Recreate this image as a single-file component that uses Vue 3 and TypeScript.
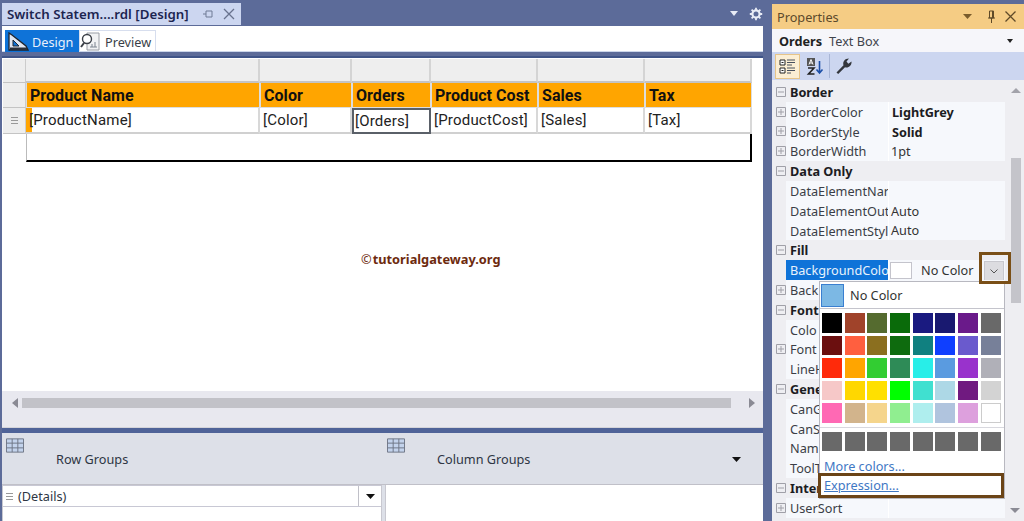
<script setup lang="ts">
const headers = ['Product Name', 'Color', 'Orders', 'Product Cost', 'Sales', 'Tax']
const fields = ['[ProductName]', '[Color]', '[Orders]', '[ProductCost]', '[Sales]', '[Tax]']

interface Row { kind: 'cat' | 'prop'; label: string; value?: string; bold?: boolean; expand?: boolean; sel?: boolean }
const rows: Row[] = [
  { kind: 'cat', label: 'Border' },
  { kind: 'prop', label: 'BorderColor', value: 'LightGrey', bold: true, expand: true },
  { kind: 'prop', label: 'BorderStyle', value: 'Solid', bold: true, expand: true },
  { kind: 'prop', label: 'BorderWidth', value: '1pt', expand: true },
  { kind: 'cat', label: 'Data Only' },
  { kind: 'prop', label: 'DataElementNar', value: '' },
  { kind: 'prop', label: 'DataElementOut', value: 'Auto' },
  { kind: 'prop', label: 'DataElementStyl', value: 'Auto' },
  { kind: 'cat', label: 'Fill' },
  { kind: 'prop', label: 'BackgroundColo', sel: true },
  { kind: 'prop', label: 'Back', expand: true },
  { kind: 'cat', label: 'Font' },
  { kind: 'prop', label: 'Colo' },
  { kind: 'prop', label: 'Font', expand: true },
  { kind: 'prop', label: 'LineH' },
  { kind: 'cat', label: 'Gene' },
  { kind: 'prop', label: 'CanG' },
  { kind: 'prop', label: 'CanS' },
  { kind: 'prop', label: 'Nam' },
  { kind: 'prop', label: 'ToolT' },
  { kind: 'cat', label: 'Inter' },
  { kind: 'prop', label: 'UserSort', expand: true },
]

const palette = [
  '#000000', '#a0432a', '#556b2f', '#0a6b0a', '#1a1a80', '#191970', '#6a1a8a', '#696969',
  '#6b0f0f', '#ff5f3f', '#8b6f1f', '#0e6b0e', '#108080', '#0f3fff', '#6a5acd', '#778099',
  '#ff2a0a', '#ffa500', '#32cd32', '#2e8b57', '#28eee8', '#5a9be0', '#9932cc', '#b0b0b8',
  '#f6c8c8', '#ffd700', '#ffe000', '#00ff00', '#40e0d0', '#add8e6', '#701a80', '#d3d3d3',
  '#ff69b4', '#d2b48c', '#f5d58c', '#90ee90', '#afeeee', '#b0c4de', '#dda0dd', '#ffffff',
]
const recent = Array.from({ length: 8 }, () => '#696969')
</script>

<template>
  <div class="app">
    <section class="left">
      <div class="tabrow">
        <div class="doctab">
          <span class="doctitle">Switch Statem....rdl [Design]</span>
          <svg class="pin" width="12" height="12" viewBox="0 0 12 12"><path d="M1 6h3M4 3v6M4 3h6v1M4 9h6V8M10 4v4" fill="none" stroke="#6f7a95" stroke-width="1"/></svg>
          <svg width="12" height="12" viewBox="0 0 12 12"><path d="M1 1l10 10M11 1L1 11" stroke="#68728e" stroke-width="1.3"/></svg>
        </div>
        <div class="tabtools">
          <svg width="10" height="6" viewBox="0 0 10 6"><path d="M1 0h8L5 5z" fill="#e8ecf6"/></svg>
          <svg width="14" height="14" viewBox="0 0 14 14"><circle cx="7" cy="7" r="3.6" fill="none" stroke="#e8ecf6" stroke-width="2.2"/><path d="M7 .8v2.4M7 10.8v2.4M.8 7h2.4M10.8 7h2.4M2.6 2.6l1.7 1.7M9.7 9.7l1.7 1.7M11.4 2.6L9.7 4.3M4.3 9.7l-1.7 1.7" stroke="#e8ecf6" stroke-width="1.8"/></svg>
        </div>
      </div>
      <div class="modes">
        <div class="mode active">
          <svg width="22" height="20" viewBox="0 0 22 20"><path d="M2 1v17h19l-2-4L5 3z" fill="#dfe6f2" stroke="#20242c" stroke-width="1.3"/><path d="M6 8v6h6z" fill="#0f73d8" stroke="#20242c"/><path d="M3 15.500h17v2.500H3z" fill="#2a2f38"/></svg>
          <span>Design</span>
        </div>
        <div class="mode">
          <svg width="22" height="22" viewBox="0 0 22 22"><path d="M7 2h12v17H7z" fill="#f1f2f4" stroke="#9a9ea6"/><circle cx="7" cy="8" r="4.500" fill="#fff" stroke="#3c4048" stroke-width="1.4"/><path d="M4 12l-3 4" stroke="#3c4048" stroke-width="2"/><path d="M12 16v-3M15 16v-5M10 16h7" stroke="#7d8490"/></svg>
          <span>Preview</span>
        </div>
      </div>
      <div class="surface">
        <div class="report">
          <div class="corner"></div>
          <div v-for="h in headers" :key="'g' + h" class="handle"></div>
          <div class="corner tall"></div>
          <div v-for="h in headers" :key="h" class="th">{{ h }}</div>
          <div class="corner rowh"><i></i></div>
          <div v-for="(f, i) in fields" :key="f" class="td" :class="{ selected: i === 2, first: i === 0 }">{{ f }}</div>
          <div class="blank"></div>
          <div class="foot"></div>
        </div>
        <div class="watermark"><span class="copy">©</span>tutorialgateway.org</div>
      </div>
      <div class="hscroll">
        <svg width="6" height="10" viewBox="0 0 6 10"><path d="M6 0v10L0 5z" fill="#8a8a94"/></svg>
        <div class="thumb"></div>
        <svg width="6" height="10" viewBox="0 0 6 10"><path d="M0 0v10l6-5z" fill="#8a8a94"/></svg>
      </div>
      <div class="groups">
        <div class="ghead">
          <div class="gcell row">
            <svg class="gicon" width="18" height="15" viewBox="0 0 19 15"><path d="M.5.500h18v14H.5z" fill="#c3d3ec" stroke="#6d7484"/><path d="M.5 5h18M.5 10h18M6.500.500v14M12.500.500v14" stroke="#6d7484"/></svg>
            <span>Row Groups</span>
          </div>
          <div class="gcell col">
            <svg class="gicon" width="18" height="15" viewBox="0 0 19 15"><path d="M.5.500h18v14H.5z" fill="#c3d3ec" stroke="#6d7484"/><path d="M.5 5h18M.5 10h18M6.500.500v14M12.500.500v14" stroke="#6d7484"/></svg>
            <span>Column Groups</span>
          </div>
          <svg class="gcaret" width="9" height="5" viewBox="0 0 9 5"><path d="M0 0h9L4.500 5z" fill="#111"/></svg>
        </div>
        <div class="gbody">
          <div class="gleft">
            <div class="detail">
              <i class="lines"></i>
              <span>(Details)</span>
              <div class="dbtn"><svg width="9" height="5" viewBox="0 0 9 5"><path d="M0 0h9L4.500 5z" fill="#111"/></svg></div>
            </div>
          </div>
          <div class="gright"></div>
        </div>
      </div>
    </section>

    <aside class="props">
      <header class="ptitle">
        <span>Properties</span>
        <div class="ptools">
          <svg class="pcaret" width="9" height="5" viewBox="0 0 9 5"><path d="M0 0h9L4.500 5z" fill="#7a5c2c"/></svg>
          <svg width="9" height="13" viewBox="0 0 9 13"><path d="M2.500 1h4v7h-4zM1 8h7M4.500 8v5M5.500 1v7" fill="none" stroke="#5f4a28"/></svg>
          <svg width="11" height="11" viewBox="0 0 11 11"><path d="M.5.500l10 10M10.500.500l-10 10" stroke="#5f4a28" stroke-width="1.3"/></svg>
        </div>
      </header>
      <div class="psubject"><b>Orders</b><span>Text Box</span><svg width="6" height="4" viewBox="0 0 6 4"><path d="M0 0h6L3 4z" fill="#222"/></svg></div>
      <div class="ptoolbar">
        <div class="tbtn on">
          <svg width="17" height="17" viewBox="0 0 17 17"><path d="M1 2h5v5H1zM1 10h5v5H1z" fill="#fff" stroke="#222"/><path d="M2.500 4.500h2M2.500 12.500h2" stroke="#222"/><path d="M8 2h8M8 4.500h8M8 7h5M8 10h8M8 12.500h8M8 15h4" stroke="#48505e"/></svg>
        </div>
        <div class="tbtn">
          <svg width="18" height="19" viewBox="0 0 18 19"><path d="M1 1h8v8H1z" fill="#555"/><path d="M3 7.500l2-5 2 5M3.800 6h2.400" fill="none" stroke="#fff"/><path d="M2 11h6L2.500 17H8.500" fill="none" stroke="#222" stroke-width="1.600"/><path d="M13.500 4v12M10.500 12.500l3 3.500 3-3.500" fill="none" stroke="#1c4fa8" stroke-width="1.600"/></svg>
        </div>
        <i class="tsep"></i>
        <div class="tbtn wrench">
          <svg width="18" height="18" viewBox="0 0 18 18"><path d="M1.500 15.500L8.500 8.200C7.500 5 9.500 1.500 14 1.500L11.500 4.500l1.800 2.300L16.500 4.500c.4 4-3 6.800-6.500 5.800L3.200 17z" fill="#33363c"/></svg>
        </div>
      </div>
      <div class="pgrid">
        <div class="plist">
          <div v-for="(r, i) in rows" :key="i" class="prow" :class="r.kind">
            <div class="gutter">
              <svg v-if="r.kind === 'cat' || r.expand" width="10" height="10" viewBox="0 0 10 10">
                <path d="M.5.500h9v9h-9z" fill="none" stroke="#a0a0a8"/>
                <path d="M2 5h6" stroke="#a0a0a8"/>
                <path v-if="r.kind === 'prop'" d="M5 2v6" stroke="#a0a0a8"/>
              </svg>
            </div>
            <template v-if="r.kind === 'cat'"><b class="catname">{{ r.label }}</b></template>
            <template v-else>
              <div class="pname" :class="{ sel: r.sel }">{{ r.label }}</div>
              <div class="pval" :class="{ strong: r.bold }">
                <template v-if="r.sel">
                  <i class="chip"></i><span class="nocolor">No Color</span>
                  <div class="ddbtn"><svg width="8" height="5" viewBox="0 0 8 5"><path d="M.5.500L4 4 7.500.500" fill="none" stroke="#555"/></svg></div>
                </template>
                <template v-else>{{ r.value }}</template>
              </div>
            </template>
          </div>
        </div>
        <div class="vscroll">
          <svg width="10" height="5" viewBox="0 0 10 5"><path d="M0 5h10L5 0z" fill="#a2a2aa"/></svg>
          <div class="vthumb"></div>
          <svg width="10" height="5" viewBox="0 0 10 5"><path d="M0 0h10L5 5z" fill="#8a8a94"/></svg>
        </div>

        <div class="popup">
          <div class="nocolor-row"><i class="nc-swatch"></i><span>No Color</span></div>
          <div class="swatches">
            <i v-for="(c, i) in palette" :key="i" :style="{ background: c }"></i>
          </div>
          <div class="swatches recent">
            <i v-for="(c, i) in recent" :key="i" :style="{ background: c }"></i>
          </div>
          <a class="plink more">More colors...</a>
          <a class="plink expr"><span>Expression...</span></a>
        </div>
        <div class="callout"></div>
      </div>
    </aside>
  </div>
</template>

<style>
html, body { margin: 0; padding: 0; overflow: hidden; }
</style>

<style scoped>
.app {
  width: 1024px; height: 521px; display: flex; background: #5c6b99; overflow: hidden;
  font-family: "Noto Sans", "Open Sans", sans-serif; font-size: 12.700px; color: #222;
}
.left { width: 761px; margin-left: 2px; display: flex; flex-direction: column; height: 521px; flex: none; }
.tabrow { height: 25px; flex: none; display: flex; justify-content: space-between; align-items: flex-end; }
.doctab {
  width: 239px; height: 22px; background: #ccd6f0; display: flex; align-items: center; box-sizing: border-box; padding-left: 5px;
}
.doctitle { font-size: 13.300px; font-weight: 600; color: #1c2550; width: 195px; white-space: nowrap; }
.pin { margin-right: 9px; }
.tabtools { display: flex; gap: 10px; align-items: center; height: 25px; padding-top: 3px; box-sizing: border-box; }
.modes {
  height: 26px; background: #fff; flex: none; display: flex; padding: 4px 0 0 3px; box-sizing: border-box;
  border-bottom: 1px solid #ccd6ea; margin-top: 1px;
}
.mode { display: flex; align-items: center; gap: 3px; height: 22px; font-size: 12.700px; color: #3a3f48; padding-right: 4px; border: 1px solid #d7deee; border-bottom: 0; box-sizing: border-box; }
.mode.active { background: #0f73d8; color: #e8f0fb; width: 74px; border-color: #0f73d8; padding-left: 1px; gap: 3px; }
.surface { flex: 1; background: #fff; border-top: 2px solid #3f5488; margin-top: 4px; position: relative; min-height: 0; }
.report {
  display: grid; grid-template-columns: 23px 234px 92px 79px 107px 107px 107px;
  grid-template-rows: 24px 25px 26px 28px; width: 749px; margin: 1px 0 0 1px;
  font-family: "Roboto", "Noto Sans", sans-serif;
}
.corner { background: #eeeeee; border-right: 1px solid #ccc; border-bottom: 1px solid #c4c4c4; box-sizing: border-box; }
.handle { background: #eeeeee; border-right: 2px solid #d4d4d4; border-bottom: 2px solid #c4c4c4; box-sizing: border-box; }
.rowh { display: flex; align-items: center; justify-content: center; }
.rowh i, .lines { display: block; width: 7px; height: 5px; border-top: 1px solid #999; border-bottom: 1px solid #999; position: relative; }
.rowh i::after, .lines::after { content: ""; position: absolute; left: 0; right: 0; top: 2px; height: 1px; background: #999; }
.th {
  background: #ffa500; font-weight: 700; font-size: 16px; letter-spacing: .05px; color: #111; padding: 1px 0 0 3px;
  display: flex; align-items: center; border-right: 1px solid #ddd; border-bottom: 1px solid #ddd; border-left: 1px solid #ddd; box-sizing: border-box; white-space: nowrap;
}
.td {
  font-size: 15px; letter-spacing: .2px; color: #222; padding-left: 3px; display: flex; align-items: center; background: #fff;
  border-right: 2px solid #d8d8d8; border-bottom: 2px solid #d0d0d0; box-sizing: border-box; white-space: nowrap;
}
.td.first { background: linear-gradient(90deg, #ffa500 6px, #fff 6px); padding-left: 3px; }
.td.selected { border: 2px solid #5a6068; padding-left: 1px; }
.blank { background: #fff; }
.foot { grid-column: 2 / 8; border-left: 1px solid #bbb; border-right: 2px solid #000; border-bottom: 2px solid #000; box-sizing: border-box; }
.watermark {
  position: absolute; left: 359px; top: 192px; font-family: "Noto Sans", sans-serif; font-weight: 700; font-size: 12.800px; color: #6d2a0e; white-space: nowrap;
}
.copy { font-weight: 400; margin-right: 1px; }
.hscroll {
  height: 37px; background: #e8e8ef; flex: none; display: flex; align-items: flex-start; padding: 4px 8px 0 10px; box-sizing: border-box; gap: 4px;
  border-bottom: 1px solid #d4d4da;
}
.hscroll svg { margin-top: 3px; }
.hscroll svg:last-child { margin-left: 14px; }
.thumb { width: 711px; height: 10px; background: #c2c2c8; margin-top: 3px; }
.groups { flex: none; border-top: 5px solid #4f6398; display: flex; flex-direction: column; height: 88px; }
.ghead { height: 52px; background: #dde0e8; display: flex; position: relative; flex: none; border-bottom: 1px solid #c0c0c8; box-sizing: border-box; }
.gcell { position: relative; }
.gcell span { position: absolute; top: 17px; white-space: nowrap; font-size: 12.700px; color: #2e3644; }
.gicon { position: absolute; left: 4px; top: 5px; }
.gcell.row { width: 383px; }
.gcell.row span { left: 54px; }
.gcell.col { width: 350px; }
.gcell.col span { left: 52px; }
.gcell.col .gicon { left: 2px; }
.gcaret { position: absolute; right: 22px; top: 24px; }
.gbody { flex: 1; display: flex; background: #dde0e8; min-height: 0; }
.gleft { width: 378px; background: #fff; border-left: 1px solid #c8c8d0; border-right: 1px solid #c8c8d0; margin-right: 3px; }
.gright { flex: 1; background: #fff; border-left: 1px solid #c8c8d0; }
.detail { height: 22px; display: flex; align-items: center; border: 1px solid #c8c8d4; border-left: 0; border-right: 0; box-sizing: border-box; gap: 5px; padding-left: 3px; position: relative; font-size: 12.700px; color: #2e3644; }
.detail .dbtn { margin-left: auto; width: 22px; height: 20px; border-left: 1px solid #c0c0c8; display: flex; align-items: center; justify-content: center; }

.props { width: 252px; margin-left: 9px; flex: none; display: flex; flex-direction: column; height: 521px; }
.ptitle {
  height: 25px; margin-top: 4px; background: #f5cc84; flex: none; display: flex; align-items: center; justify-content: space-between;
  padding: 0 8px 0 5px; box-sizing: border-box; font-size: 12.700px; color: #5c4a2c;
}
.ptools { display: flex; align-items: center; gap: 9px; }
.pcaret { margin-right: 6px; }
.psubject { height: 23px; background: #f6f6fa; flex: none; display: flex; align-items: center; gap: 7px; padding-left: 7px; font-size: 12.700px; position: relative; }
.psubject b { font-weight: 700; color: #222; }
.psubject span { color: #40444c; }
.psubject svg { position: absolute; right: 11px; top: 10px; }
.ptoolbar { height: 28px; background: #ccd6f0; flex: none; display: flex; align-items: center; gap: 2px; padding-left: 3px; box-sizing: border-box; }
.tbtn { width: 25px; height: 25px; display: flex; align-items: center; justify-content: center; box-sizing: border-box; }
.tbtn.on { background: #fbeed4; border: 1px solid #e6c489; }
.tbtn.wrench { margin-left: -1px; }
.tsep { width: 1px; height: 24px; background: #a9b6d6; }
.pgrid { flex: 1; background: #eeeef2; display: flex; position: relative; min-height: 0; }
.plist { width: 233px; padding-top: 2px; flex: none; }
.prow { height: 19.800px; display: flex; align-items: center; box-sizing: border-box; white-space: nowrap; }
.gutter { width: 14px; flex: none; display: flex; align-items: center; justify-content: center; padding-left: 3px; box-sizing: border-box; }
.catname { font-size: 12.700px; font-weight: 700; color: #1c1c22; margin-left: 4px; }
.pname { width: 103px; height: 100%; padding-left: 4px; box-sizing: border-box; background: #f6f8fc; overflow: hidden; font-size: 12.700px; line-height: 20px; color: #3a3e46; border-right: 1px solid #fff; }
.pname.sel { background: #0f73d8; color: #e8f2fc; }
.pval { flex: 1; height: 100%; background: #f6f8fc; font-size: 12.700px; line-height: 20px; color: #333; padding-left: 2px; display: flex; align-items: center; position: relative; }
.pval.strong { font-weight: 700; color: #1c1c22; padding-left: 3px; }
.chip { width: 22px; height: 17px; background: #fff; border: 1px solid #c4c4cc; box-sizing: border-box; margin-left: -1px; flex: none; }
.nocolor { margin-left: 9px; }
.ddbtn { position: absolute; right: 1px; top: 1px; width: 20px; height: 20px; background: #dcdce0; border: 1px solid #c8c8ce; display: flex; align-items: center; justify-content: center; box-sizing: border-box; }
.vscroll { width: 11px; margin-left: 5px; flex: none; display: flex; flex-direction: column; align-items: center; padding-top: 8px; box-sizing: border-box; height: 441px; position: relative; }
.vthumb { width: 10px; height: 145px; background: #c4c4ca; margin-top: 65px; }
.vscroll svg:last-child { position: absolute; bottom: 8px; left: 0; }
.popup {
  position: absolute; left: 47px; top: 201px; width: 186px; height: 218px; background: #fff; border: 1px solid #b8b8c0; box-sizing: border-box;
  display: flex; flex-direction: column;
}
.nocolor-row { height: 27px; display: flex; align-items: center; gap: 6px; padding-left: 1px; border-bottom: 1px solid #c4c4cc; flex: none; font-size: 12.700px; color: #333; box-sizing: border-box; }
.nc-swatch { width: 23px; height: 23px; background: #7cb8e4; border: 1px solid #3a7fd0; box-sizing: border-box; }
.swatches { display: grid; grid-template-columns: repeat(8, 20px); gap: 3px 2.700px; padding: 4px 0 0 2px; flex: none; }
.swatches i { display: block; height: 19.500px; box-sizing: border-box; }
.swatches i:nth-child(40) { border: 1px solid #ccc; }
.swatches.recent { margin-top: 4px; border-top: 1px solid #d8d8de; padding-top: 4px; }
.plink { font-size: 12.700px; color: #3f78c4; padding-left: 4px; flex: none; }
.more { margin-top: 6px; height: 18px; line-height: 18px; }
.expr { height: 25px; line-height: 19px; border: 3px solid #6b4417; padding-left: 3px; margin: -2px 0 0 -2px; width: 186px; box-sizing: border-box; background: #fff; }
.expr span { text-decoration: underline; }
.callout { position: absolute; left: 207px; top: 172px; width: 32px; height: 32px; border: 3px solid #7a4f17; box-sizing: border-box; }
</style>
